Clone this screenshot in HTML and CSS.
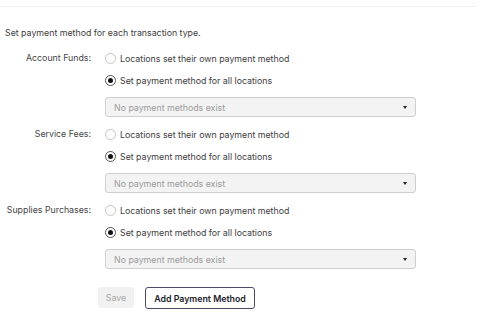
FILE: index.html
```html
<!DOCTYPE html>
<html>
<head>
<meta charset="utf-8">
<link rel="stylesheet" href="styles.css">
</head>
<body>
<div class="page">
  <div class="rule"></div>
  <p class="intro">Set payment method for each transaction type.</p>
  <div class="form">
    <div class="group">
      <div class="label">Account Funds:</div>
      <div class="controls">
        <label class="radio"><span class="dot"></span>Locations set their own payment method</label>
        <label class="radio"><span class="dot on"></span>Set payment method for all locations</label>
        <div class="select"><span>No payment methods exist</span><span class="caret"></span></div>
      </div>
    </div>
    <div class="group">
      <div class="label">Service Fees:</div>
      <div class="controls">
        <label class="radio"><span class="dot"></span>Locations set their own payment method</label>
        <label class="radio"><span class="dot on"></span>Set payment method for all locations</label>
        <div class="select"><span>No payment methods exist</span><span class="caret"></span></div>
      </div>
    </div>
    <div class="group">
      <div class="label">Supplies Purchases:</div>
      <div class="controls">
        <label class="radio"><span class="dot"></span>Locations set their own payment method</label>
        <label class="radio"><span class="dot on"></span>Set payment method for all locations</label>
        <div class="select"><span>No payment methods exist</span><span class="caret"></span></div>
      </div>
    </div>
  </div>
  <div class="actions">
    <button class="btn save">Save</button>
    <button class="btn add">Add Payment Method</button>
  </div>
</div>
</body>
</html>
```

FILE: styles.css
```css
* { box-sizing: border-box; }
html, body { margin: 0; padding: 0; background: #fff; }
body {
  font-family: Inter, "Liberation Sans", sans-serif;
  font-size: 8.8px;
  color: #3d3d3d;
}
.page { padding-top: 6px; }
.rule { height: 1px; background: #efefef; width: 476px; }
.intro { margin: 20px 0 0 5px; line-height: 12px; height: 12px; }
.form {
  margin-top: 12px;
  display: flex;
  flex-direction: column;
  gap: 10px;
}
.group {
  display: grid;
  grid-template-columns: 91px 311px;
  column-gap: 14px;
}
.label {
  text-align: right;
  line-height: 14px;
  color: #454545;
}
.controls {
  display: flex;
  flex-direction: column;
}
.radio {
  display: flex;
  align-items: center;
  height: 14px;
  gap: 4px;
}
.radio + .radio { margin-top: 8px; }
.dot {
  width: 11px;
  height: 11px;
  border-radius: 50%;
  border: 1px solid #c4c4c4;
  background: #fff;
  display: flex;
  align-items: center;
  justify-content: center;
  flex: none;
}
.dot.on { border-color: #555; }
.dot.on::after {
  content: "";
  width: 5px;
  height: 5px;
  border-radius: 50%;
  background: #111;
}
.select {
  margin-top: 10px;
  height: 20px;
  border: 1px solid #cfcfcf;
  border-radius: 3px;
  background: #f3f3f3;
  color: #9a9a9a;
  display: flex;
  align-items: center;
  justify-content: space-between;
  padding: 0 8px 0 8px;
}
.caret {
  width: 0;
  height: 0;
  border-left: 2px solid transparent;
  border-right: 2px solid transparent;
  border-top: 3px solid #222;
}
.actions {
  margin-top: 18px;
  padding-left: 98px;
  display: flex;
  gap: 11px;
}
.btn {
  font-family: Inter, "Liberation Sans", sans-serif;
  font-size: 8.8px;
  height: 21px;
  border-radius: 3px;
  padding: 0;
}
.save {
  width: 36px;
  background: #f1f1f1;
  border: none;
  color: #a8a8a8;
}
.add {
  width: 110px;
  height: 22px;
  background: #fff;
  border: 1px solid #4a4a66;
  color: #1c1c2a;
  font-weight: 600;
}
```
